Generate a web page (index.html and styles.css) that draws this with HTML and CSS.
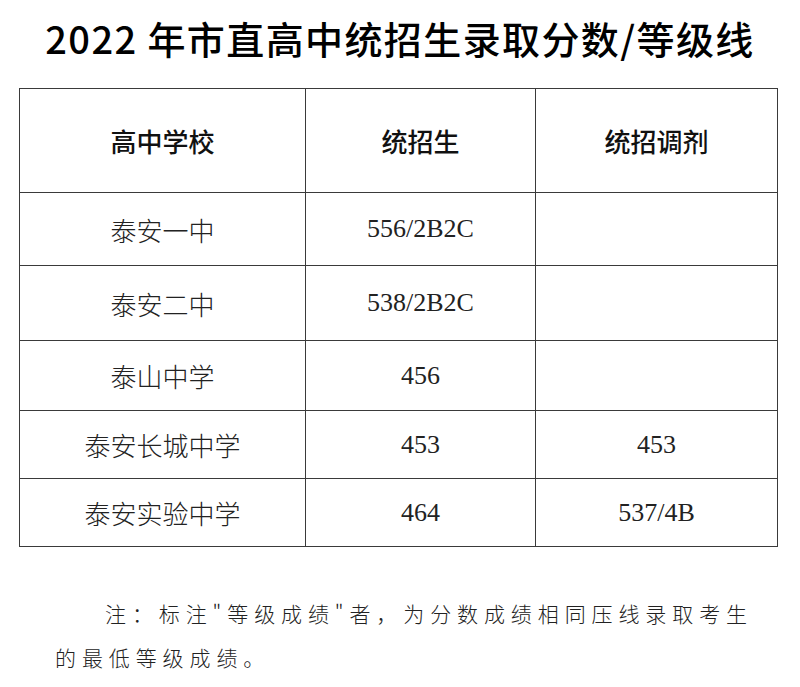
FILE: index.html
```html
<!DOCTYPE html>
<html lang="zh-CN">
<head>
<meta charset="utf-8">
<link rel="stylesheet" href="styles.css">
</head>
<body>
<div class="page">
  <h1 class="title">2022 年市直高中统招生录取分数/等级线</h1>
  <table class="scores">
    <colgroup>
      <col class="c1"><col class="c2"><col class="c3">
    </colgroup>
    <thead>
      <tr class="head"><th>高中学校</th><th>统招生</th><th>统招调剂</th></tr>
    </thead>
    <tbody>
      <tr class="r1"><td>泰安一中</td><td class="num">556/2B2C</td><td class="num"></td></tr>
      <tr class="r2"><td>泰安二中</td><td class="num">538/2B2C</td><td class="num"></td></tr>
      <tr class="r3"><td>泰山中学</td><td class="num">456</td><td class="num"></td></tr>
      <tr class="r4"><td>泰安长城中学</td><td class="num">453</td><td class="num">453</td></tr>
      <tr class="r5"><td>泰安实验中学</td><td class="num">464</td><td class="num">537/4B</td></tr>
    </tbody>
  </table>
  <p class="note">注：标注"等级成绩"者，为分数成绩相同压线录取考生的最低等级成绩。</p>
</div>
</body>
</html>
```

FILE: styles.css
```css
html, body {
  margin: 0;
  padding: 0;
  background: #ffffff;
}
.page {
  width: 800px;
  height: 687px;
  overflow: hidden;
  color: #111;
}
.title {
  margin: 0;
  padding-top: 14px;
  height: 88px;
  box-sizing: border-box;
  text-align: center;
  font-family: "Noto Sans CJK SC", sans-serif;
  font-weight: 500;
  font-size: 38px;
  line-height: 48px;
  letter-spacing: 1.4px;
  color: #000;
}
.scores {
  margin-left: 19px;
  border-collapse: collapse;
  table-layout: fixed;
  width: 758px;
}
.c1 { width: 286px; }
.c2 { width: 230px; }
.c3 { width: 242px; }
.scores th, .scores td {
  border: 1.5px solid #3a3a3a;
  text-align: center;
  vertical-align: middle;
  padding: 0;
}
.scores th {
  font-family: "Noto Sans CJK SC", sans-serif;
  font-weight: 500;
  font-size: 26px;
  color: #111;
}
.scores td {
  font-family: "Noto Sans CJK SC", sans-serif;
  font-weight: 300;
  font-size: 26px;
  color: #222;
}
.scores td.num {
  font-family: "Liberation Serif", "Noto Sans CJK SC", serif;
  font-weight: 400;
  font-size: 26px;
}
.head { height: 104px; }
.r1 { height: 73px; }
.r2 { height: 75px; }
.r3 { height: 70px; }
.r4 { height: 68px; }
.r5 { height: 68px; }
.note {
  margin: 44px 0 0 55px;
  width: 700px;
  text-indent: 50px;
  font-family: "Noto Sans CJK SC", sans-serif;
  font-weight: 300;
  font-size: 21px;
  letter-spacing: 5.9px;
  line-height: 44px;
  color: #222;
}
```
